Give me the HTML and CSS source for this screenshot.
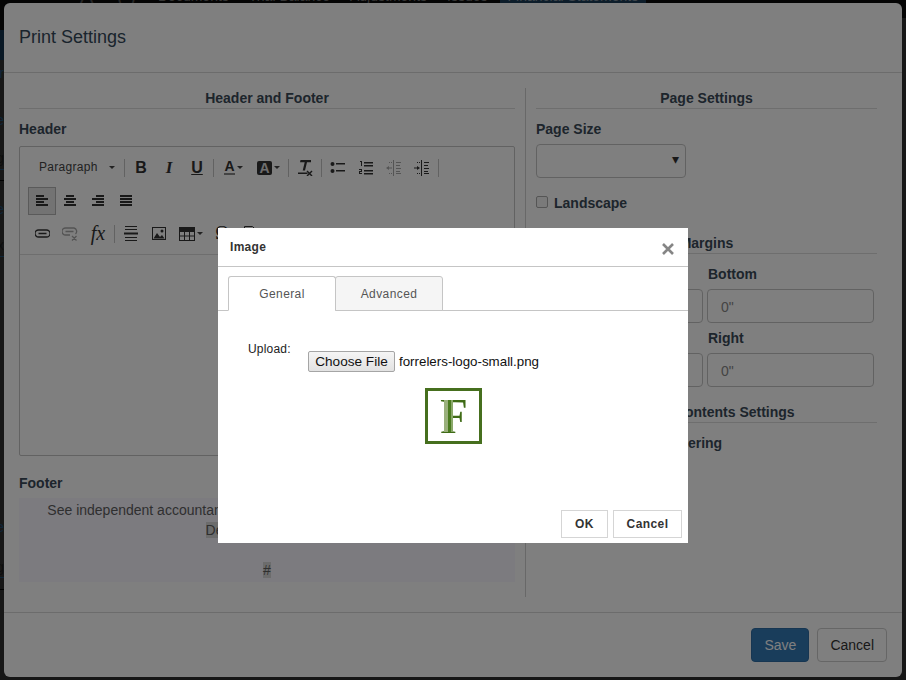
FILE: index.html
```html
<!DOCTYPE html>
<html>
<head>
  <title>Print Settings</title>
  <link rel="stylesheet" href="styles.css">
</head>
<body>
  <div class="page">
    <div class="side-strip">
      <span class="side-band"></span>
      <span class="side-char blue top-1">r</span>
      <span class="side-char blue top-2">e</span>
      <span class="side-char top-3">g</span>
      <span class="side-rule top-4"></span>
      <span class="side-dash top-5"></span>
      <span class="side-char blue top-6">e</span>
      <span class="side-char top-7">x</span>
      <span class="side-rule top-8"></span>
      <span class="side-char blue top-9">e</span>
      <span class="side-char top-10">g</span>
      <span class="side-rule top-11"></span>
      <span class="side-dash top-12"></span>
    </div>
    <div class="page-main">
      <div class="top-nav">
        <span class="brand">A</span>
        <span class="brand brand-round">( )</span>
        <a>Documents</a>
        <a>Trial Balance</a>
        <a>Adjustments</a>
        <a>Issues</a>
        <a class="active">Financial Statements</a>
      </div>
    </div>
  </div>

  <div class="modal">
    <div class="modal-header">Print Settings</div>
    <div class="modal-body">
      <div class="col-left">
        <div class="section-title">Header and Footer</div>
        <div class="field-label">Header</div>
        <div class="editor">
          <div class="toolbar">
            <div class="tb-row">
              <span class="tb-format">Paragraph<i class="caret"></i></span>
              <span class="tb-sep"></span>
              <span class="tb-btn tb-text bold">B</span>
              <span class="tb-btn tb-text italic">I</span>
              <span class="tb-btn tb-text under">U</span>
              <span class="tb-sep"></span>
              <span class="tb-btn tb-wide">
                <span class="color-a">A</span><i class="caret"></i>
              </span>
              <span class="tb-btn tb-wide">
                <span class="color-box">A</span><i class="caret"></i>
              </span>
              <span class="tb-sep"></span>
              <span class="tb-btn">
                <svg width="16" height="16" viewBox="0 0 16 16"><path d="M3.500 0h10.500v2.200h-4L8 10.500H5.700L7.700 2.200H3z"/><path d="M1 12.500h9.500v1.500H1z"/><path d="M10.500 10.500l2 2 2-2 1 1-2 2 2 2-1 1-2-2-2 2-1-1 2-2-2-2z"/></svg>
              </span>
              <span class="tb-sep"></span>
              <span class="tb-btn">
                <svg width="16" height="16" viewBox="0 0 16 16"><circle cx="2.500" cy="4" r="2"/><circle cx="2.500" cy="11" r="2"/><path d="M6 3h9v1.500H6zM6 10h9v1.500H6z"/></svg>
              </span>
              <span class="tb-btn">
                <svg width="16" height="16" viewBox="0 0 16 16"><path d="M2 1h2v5H3V2H2zM1 9h3v3H2v1h2v1H1v-3h2v-1H1zM6 2h9v1.500H6zM6 5h9v1.500H6zM6 10h9v1.500H6zM6 13h9v1.500H6z"/></svg>
              </span>
              <span class="tb-btn disabled">
                <svg width="16" height="16" viewBox="0 0 16 16"><path d="M7 0h1v16H7zM10 2h5v1h-5zM10 5h4v1h-4zM10 8h5v1h-5zM10 11h4v1h-4zM10 13h5v1h-5zM3 2h1v1H3zM5 2h1v1H5zM3 13h1v1H3zM5 13h1v1H5zM0 8l3-2v1.500h3v1H3V10z"/></svg>
              </span>
              <span class="tb-btn">
                <svg width="16" height="16" viewBox="0 0 16 16"><path d="M7 0h1v16H7zM10 2h5v1h-5zM10 5h4v1h-4zM10 8h5v1h-5zM10 11h4v1h-4zM10 13h5v1h-5zM3 2h1v1H3zM5 2h1v1H5zM3 13h1v1H3zM5 13h1v1H5zM6 8L3 6v1.500H0v1h3V10z"/></svg>
              </span>
              <span class="tb-sep"></span>
            </div>
            <div class="tb-row">
              <span class="tb-btn pressed">
                <svg width="14" height="12" viewBox="0 0 14 12"><path d="M1 0h8v2H1zM1 3h12v2H1zM1 6h8v2H1zM1 9h12v2H1z"/></svg>
              </span>
              <span class="tb-btn">
                <svg width="14" height="12" viewBox="0 0 14 12"><path d="M3 0h8v2H3zM1 3h12v2H1zM3 6h8v2H3zM1 9h12v2H1z"/></svg>
              </span>
              <span class="tb-btn">
                <svg width="14" height="12" viewBox="0 0 14 12"><path d="M5 0h8v2H5zM1 3h12v2H1zM5 6h8v2H5zM1 9h12v2H1z"/></svg>
              </span>
              <span class="tb-btn">
                <svg width="14" height="12" viewBox="0 0 14 12"><path d="M1 0h12v2H1zM1 3h12v2H1zM1 6h12v2H1zM1 9h12v2H1z"/></svg>
              </span>
            </div>
            <div class="tb-row">
              <span class="tb-btn">
                <svg width="15" height="10" viewBox="0 0 15 10"><path fill="none" stroke="currentColor" stroke-width="1.300" d="M6 1H3.500a3.500 3.500 0 0 0 0 7H11.500a3.500 3.500 0 0 0 0-7H6M3.500 4.500h8"/></svg>
              </span>
              <span class="tb-btn disabled">
                <svg width="16" height="14" viewBox="0 0 16 14"><path fill="none" stroke="currentColor" stroke-width="1.300" d="M6 1H3.500a3.500 3.500 0 0 0 0 7H8M10 1H6M10 1h2a3.500 3.500 0 0 1 1.500 6M3.500 4.500h8M10 9l4.500 4.500M14.500 9L10 13.500"/></svg>
              </span>
              <span class="tb-btn tb-fx"><em>fx</em></span>
              <span class="tb-sep"></span>
              <span class="tb-btn">
                <svg width="14" height="16" viewBox="0 0 14 16"><path d="M1 0h12v1H1zM1 3h12v1H1zM0 6.500h14v2H0zM1 11h12v1H1zM1 14h12v1H1z"/></svg>
              </span>
              <span class="tb-btn">
                <svg width="14" height="13" viewBox="0 0 14 13"><path fill-rule="evenodd" d="M0 0h14v13H0zM1 1v11h12V1z"/><circle cx="10" cy="4" r="1.500"/><path d="M1.500 11.500L5 6l3 4 2-2 2.500 3.500z"/></svg>
              </span>
              <span class="tb-btn tb-wide">
                <svg width="16" height="14" viewBox="0 0 16 14"><path fill-rule="evenodd" d="M0 0h16v14H0zM1 5v3.500h4V5zM6 5v3.500h4V5zM11 5v3.500h4V5zM1 9.500V13h4V9.500zM6 9.500V13h4V9.500zM11 9.500V13h4V9.500z"/></svg>
                <i class="caret"></i>
              </span>
              <span class="tb-btn tb-text special">Ω</span>
              <span class="tb-btn">
                <svg width="12" height="16" viewBox="0 0 12 16"><path fill="none" stroke="currentColor" d="M.5.500h8l3 3v12H.5z"/></svg>
              </span>
            </div>
          </div>
          <div class="editor-area"></div>
        </div>
        <div class="field-label footer-label">Footer</div>
        <div class="footer-text">
          <div>See independent accountant's review report and notes to the financials</div>
          <div><span class="mark">December 31, 2019</span></div>
          <div>&nbsp;</div>
          <div><span class="mark">#</span></div>
        </div>
      </div>

      <div class="col-right">
        <div class="section-title">Page Settings</div>
        <div class="field-label">Page Size</div>
        <div class="select-box"><span class="select-arrow">▾</span></div>
        <div class="check-row"><span class="checkbox"></span>Landscape</div>
        <div class="section-title">Margins</div>
        <div class="margin-grid">
          <div>
            <div class="grid-label">Top</div>
            <div class="text-box">0"</div>
          </div>
          <div>
            <div class="grid-label">Bottom</div>
            <div class="text-box">0"</div>
          </div>
          <div>
            <div class="grid-label">Left</div>
            <div class="text-box">0"</div>
          </div>
          <div>
            <div class="grid-label">Right</div>
            <div class="text-box">0"</div>
          </div>
        </div>
        <div class="section-title">Table of Contents Settings</div>
        <div class="check-row toc-row"><span class="checkbox"></span>Include Page Numbering</div>
      </div>
    </div>
    <div class="modal-footer">
      <button class="btn btn-primary">Save</button>
      <button class="btn">Cancel</button>
    </div>
  </div>

  <div class="backdrop"></div>

  <div class="dialog">
    <div class="dialog-title">
      <span>Image</span>
      <svg class="dialog-close" width="12" height="12" viewBox="0 0 12 12"><path fill="none" stroke="currentColor" stroke-width="2.600" d="M1 1l10 10M11 1L1 11"/></svg>
    </div>
    <div class="tabs">
      <span class="tab active">General</span>
      <span class="tab">Advanced</span>
    </div>
    <div class="dialog-body">
      <div class="upload-row">
        <label class="upload-label">Upload:</label>
        <div class="upload-file">
          <span class="file-btn">Choose File</span>
          <span class="file-name">forrelers-logo-small.png</span>
        </div>
      </div>
      <div class="logo-box"><span class="logo-f">F</span><span class="logo-stem"></span></div>
    </div>
    <div class="dialog-footer">
      <button class="dialog-btn ok-btn">OK</button>
      <button class="dialog-btn">Cancel</button>
    </div>
  </div>
</body>
</html>
```

FILE: styles.css
```css
* {
  box-sizing: border-box;
}

html, body {
  margin: 0;
  padding: 0;
  height: 100%;
}

body {
  position: relative;
  width: 906px;
  height: 680px;
  overflow: hidden;
  background-color: #2f2f2f;
  font-family: "Liberation Sans", Arial, sans-serif;
  font-size: 14px;
  color: #333;
}

/* page behind the modal, already dimmed */
.page {
  display: flex;
  height: 100%;
}

.side-strip {
  position: relative;
  width: 4px;
  overflow: hidden;
  flex-shrink: 0;
  background-color: #2f2f2f;
  border-top: 30px solid #0b0b0b;
}

.side-band {
  display: block;
  height: 30px;
  background-color: #12304a;
}

.side-char {
  display: block;
  width: 4px;
  height: 16px;
  line-height: 16px;
  direction: rtl;
  font-size: 14px;
  color: #1a1a1a;
}

.side-char.blue {
  color: #1f4a6e;
}

.side-rule {
  display: block;
  height: 1px;
  background-color: #1f4a6e;
}

.side-dash {
  display: block;
  height: 1px;
  background-color: #000;
}

.top-1 { margin-top: 5px; }
.top-2 { margin-top: 31px; }
.top-3 { margin-top: 22px; }
.top-4 { margin-top: 3px; }
.top-5 { margin-top: 10px; }
.top-6 { margin-top: 20px; }
.top-7 { margin-top: 20px; }
.top-8 { margin-top: 3px; }
.top-9 { margin-top: 262px; }
.top-10 { margin-top: 24px; }
.top-11 { margin-top: 2px; }
.top-12 { margin-top: 11px; }

.page-main {
  flex-grow: 1;
}

.top-nav {
  display: flex;
  height: 30px;
  padding-left: 76px;
  margin-top: -12px;
  background-color: #0b0b0b;
  color: #6a6a6a;
  font-size: 14px;
  line-height: 16px;
}

.top-nav a {
  margin-right: 20px;
  white-space: nowrap;
}

.brand {
  width: 37px;
  font-size: 20px;
  color: #4a4a4a;
}

.brand-round {
  width: 41px;
}

.top-nav a.active {
  margin-left: -8px;
  padding: 0 8px;
  height: 16px;
  background-color: #1a3a55;
  color: #7a8a98;
}

/* print settings modal */
.modal {
  position: absolute;
  left: 4px;
  top: 3px;
  width: 898px;
  height: 674px;
  display: flex;
  flex-direction: column;
  background-color: #fff;
  border-radius: 6px;
}

.modal-header {
  height: 70px;
  padding: 23px 15px 0;
  border-bottom: 1px solid #d9d9d9;
  font-size: 18px;
  line-height: 22px;
  color: #34485a;
}

.modal-body {
  display: flex;
  height: 539px;
  padding: 15px;
}

.col-left {
  width: 507px;
  padding-right: 10px;
  border-right: 1px solid #d0d0d0;
}

.col-right {
  width: 341px;
  margin-left: 10px;
}

.section-title {
  height: 21px;
  line-height: 20px;
  border-bottom: 1px solid #ddd;
  text-align: center;
  font-weight: bold;
  color: #3b4a58;
}

.field-label {
  height: 20px;
  margin-top: 10px;
  line-height: 20px;
  font-weight: bold;
  color: #3b4a58;
}

.editor {
  height: 310px;
  margin-top: 7px;
  border: 1px solid #c5c5c5;
  border-radius: 2px;
  display: flex;
  flex-direction: column;
}

.toolbar {
  height: 108px;
  padding: 4px 0 0 8px;
  border-bottom: 1px solid #ddd;
}

.tb-row {
  display: flex;
  align-items: center;
  height: 33px;
}

.tb-btn {
  display: flex;
  align-items: center;
  justify-content: center;
  width: 28px;
  height: 28px;
  color: #333;
  fill: currentColor;
}

.tb-btn.disabled {
  color: #a8a8a8;
}

.tb-btn.pressed {
  border: 1px solid #b5b5b5;
  background-color: #e6e6e6;
}

.tb-wide {
  gap: 2px;
  width: 35px;
}

.tb-text {
  font-size: 16px;
}

.bold {
  font-weight: bold;
}

.italic {
  font-style: italic;
  font-weight: bold;
  font-size: 17px;
  font-family: "Liberation Serif", serif;
}

.under {
  text-decoration: underline;
  font-weight: bold;
}

.special {
  font-family: "Liberation Serif", serif;
  font-size: 18px;
}

.tb-fx {
  font-family: "Liberation Serif", serif;
  font-size: 20px;
}

.tb-format {
  display: flex;
  align-items: center;
  width: 94px;
  padding: 0 0 1px 11px;
  font-size: 12px;
  letter-spacing: 0.3px;
  color: #444;
}

.tb-format .caret {
  margin-left: 11px;
}

.caret {
  display: inline-block;
  border-top: 3px solid #444;
  border-left: 3px solid transparent;
  border-right: 3px solid transparent;
}

.tb-sep {
  width: 1px;
  height: 18px;
  margin: 0 2px;
  background-color: #c4c4c4;
}

.color-a {
  font-weight: bold;
  font-size: 14px;
  line-height: 13px;
  border-bottom: 2px solid #888;
}

.color-box {
  width: 15px;
  height: 14px;
  line-height: 14px;
  border-radius: 2px;
  background-color: #333;
  color: #ddd;
  text-align: center;
  font-weight: bold;
  font-size: 14px;
}

.editor-area {
  flex-grow: 1;
}

.footer-label {
  margin-top: 17px;
}

.footer-text {
  height: 84px;
  margin-top: 5px;
  padding-top: 2px;
  background-color: #f8f6ff;
  text-align: center;
  line-height: 20px;
  color: #5f5f5f;
  white-space: nowrap;
  overflow: hidden;
}

.mark {
  display: inline-block;
  height: 16px;
  line-height: 16px;
  background-color: #d8d8d8;
}

.select-box {
  position: relative;
  width: 150px;
  height: 34px;
  margin-top: 5px;
  border: 1px solid #c5c5c5;
  border-radius: 4px;
}

.select-arrow {
  position: absolute;
  right: 6px;
  top: 6px;
  font-size: 14px;
  color: #333;
}

.check-row {
  display: flex;
  align-items: center;
  height: 20px;
  margin: 15px 0 20px;
  font-weight: bold;
  color: #3b4a58;
}

.checkbox {
  width: 12px;
  height: 12px;
  margin-right: 6px;
  margin-top: -3px;
  border: 1px solid #aaa;
  border-radius: 2px;
  background-color: #f4f4f4;
}

.margin-grid {
  display: grid;
  grid-template-columns: 167px 167px;
  column-gap: 4px;
  margin-bottom: 15px;
}

.grid-label {
  height: 20px;
  margin-top: 10px;
  margin-bottom: 5px;
  padding-left: 1px;
  line-height: 20px;
  font-weight: bold;
  color: #3b4a58;
}

.margin-grid > div:nth-child(n+3) .grid-label {
  margin-top: 5px;
}

.text-box {
  height: 34px;
  padding-left: 13px;
  line-height: 34px;
  border: 1px solid #c5c5c5;
  border-radius: 4px;
  color: #888;
}

.toc-row {
  margin-top: 10px;
}

.toc-row .checkbox {
  margin-right: 10px;
}

.modal-footer {
  display: flex;
  justify-content: flex-end;
  gap: 8px;
  flex-grow: 1;
  padding: 15px 15px 0;
  border-top: 1px solid #d9d9d9;
}

.btn {
  height: 34px;
  padding: 0 12px;
  border: 1px solid #ccc;
  border-radius: 4px;
  background-color: #fff;
  font-family: inherit;
  font-size: 14px;
  color: #333;
}

.btn-primary {
  border-color: #2e6da4;
  background-color: #337ab7;
  color: #fff;
}

.backdrop {
  position: absolute;
  left: 0;
  top: 0;
  width: 906px;
  height: 680px;
  background-color: rgba(0, 0, 0, 0.5);
}

/* image dialog on top of everything */
.dialog {
  position: absolute;
  left: 218px;
  top: 228px;
  width: 470px;
  height: 315px;
  display: flex;
  flex-direction: column;
  background-color: #fff;
  color: #333;
}

.dialog-title {
  display: flex;
  align-items: center;
  justify-content: space-between;
  height: 39px;
  padding: 0 14px 0 12px;
  border-bottom: 1px solid #c5c5c5;
  font-size: 12px;
  font-weight: bold;
  letter-spacing: 0.3px;
}

.dialog-close {
  margin-top: 3px;
  color: #858585;
}

.tabs {
  display: flex;
  height: 35px;
  margin-top: 9px;
  padding-left: 10px;
  border-bottom: 1px solid #c5c5c5;
}

.tab {
  width: 108px;
  height: 35px;
  line-height: 34px;
  margin-right: -1px;
  border: 1px solid #c5c5c5;
  border-radius: 3px 3px 0 0;
  background-color: #f5f5f5;
  text-align: center;
  font-size: 12px;
  letter-spacing: 0.4px;
  color: #555;
}

.tab.active {
  background-color: #fff;
  border-bottom-color: #fff;
}

.dialog-body {
  flex-grow: 1;
}

.upload-row {
  display: flex;
  padding: 30px 0 0 30px;
}

.upload-label {
  width: 60px;
  font-size: 12px;
  letter-spacing: 0.2px;
  line-height: 16px;
  color: #222;
}

.upload-file {
  display: flex;
  align-items: center;
  margin-top: 10px;
  height: 21px;
}

.file-btn {
  width: 87px;
  height: 21px;
  line-height: 19px;
  border: 1px solid #a5a5a5;
  border-radius: 2px;
  background: linear-gradient(#f5f5f5, #e2e2e2);
  text-align: center;
  font-size: 13.6px;
  color: #111;
}

.file-name {
  margin-left: 4px;
  font-size: 13.33px;
  color: #111;
}

.logo-box {
  position: relative;
  display: flex;
  align-items: center;
  justify-content: center;
  width: 57px;
  height: 56px;
  margin: 16px 0 0 207px;
  border: 3px solid #466f1e;
}

.logo-f {
  font-family: "Liberation Serif", serif;
  font-size: 50px;
  line-height: 50px;
  color: #3f6b16;
}

.logo-stem {
  position: absolute;
  left: 16px;
  top: 9px;
  width: 9px;
  height: 32px;
  background: linear-gradient(90deg, #9ab07c 0 50%, #4a7a20 50% 80%, #8aa86a 80%);
}

.dialog-footer {
  display: flex;
  justify-content: flex-end;
  gap: 5px;
  padding: 0 6px 5px 0;
}

.dialog-btn {
  width: 69px;
  height: 28px;
  padding: 0;
  border: 1px solid #d5d5d5;
  background-color: #fff;
  font-family: inherit;
  font-size: 12px;
  font-weight: bold;
  letter-spacing: 0.4px;
  color: #333;
}

.ok-btn {
  width: 47px;
}
```
